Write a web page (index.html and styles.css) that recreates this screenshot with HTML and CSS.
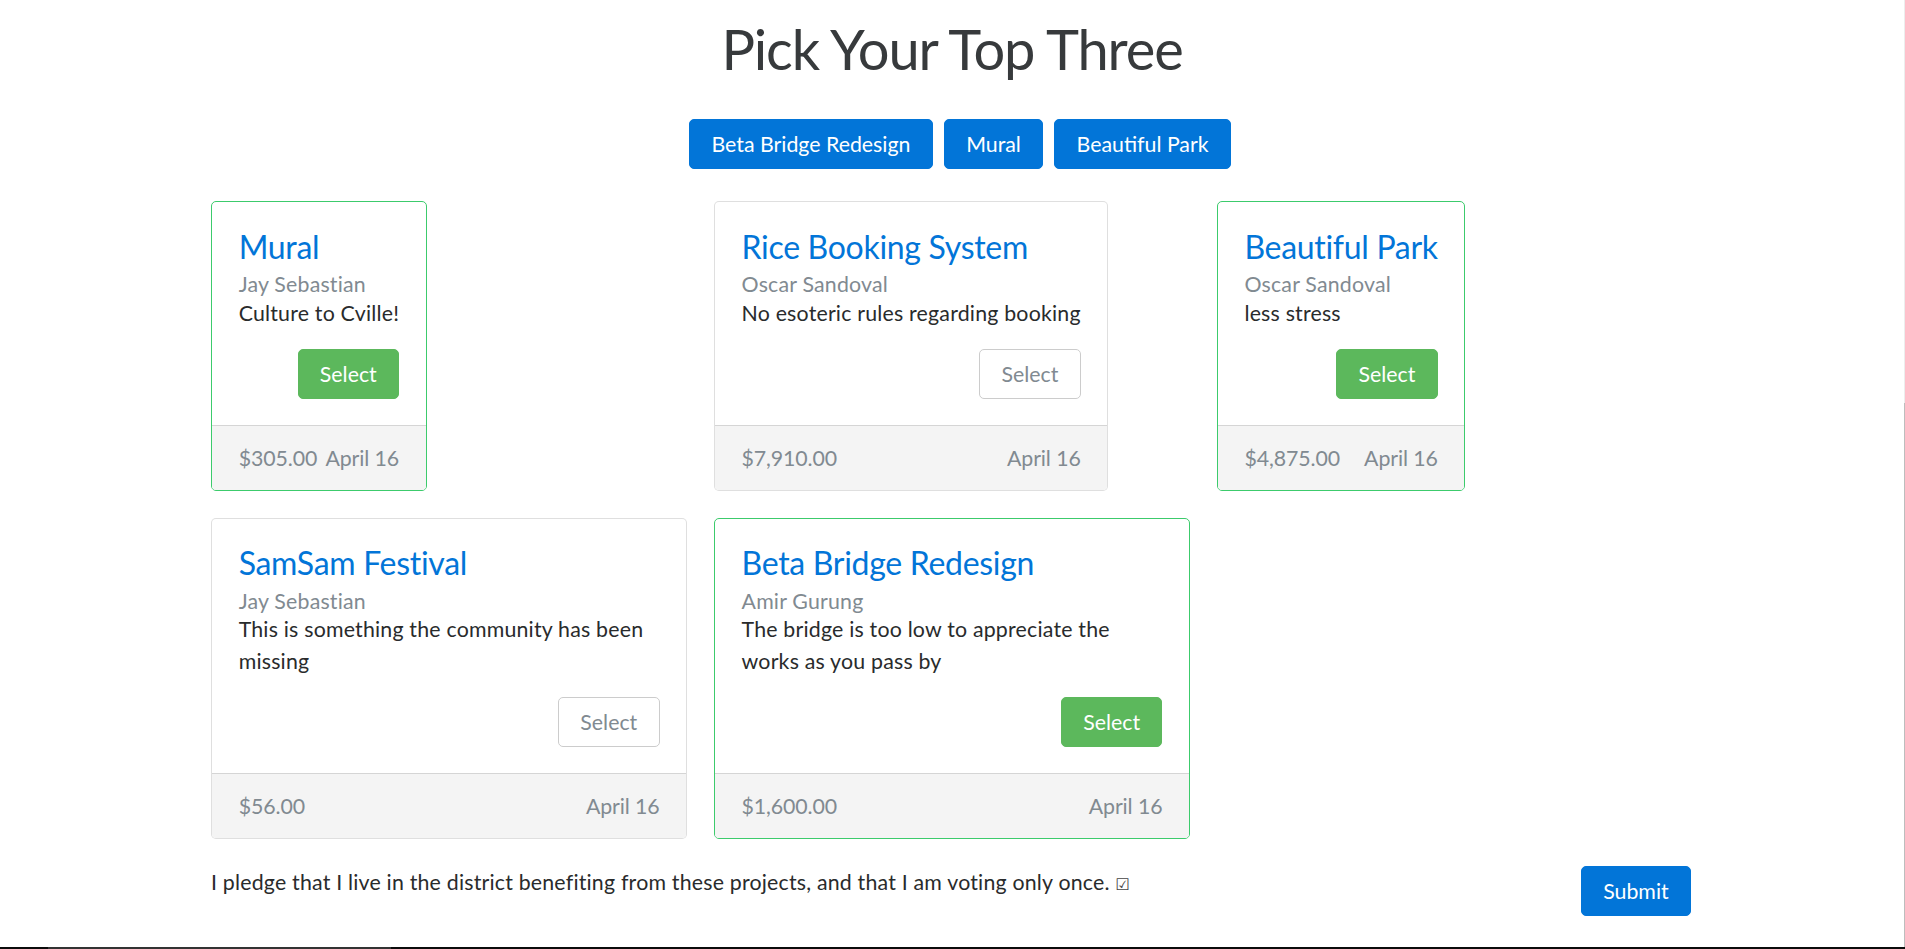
FILE: index.html
```html
<!DOCTYPE html>
<html lang="en">
<head>
<meta charset="utf-8">
<title>Pick Your Top Three</title>
<link rel="stylesheet" href="styles.css">
</head>
<body>
<div class="frame">
  <div class="page">
    <h1 class="heading">Pick Your Top Three</h1>
    <div class="picks">
      <button class="btn btn-primary">Beta Bridge Redesign</button>
      <button class="btn btn-primary">Mural</button>
      <button class="btn btn-primary">Beautiful Park</button>
    </div>
    <div class="container">
      <div class="grid">
        <div class="card selected">
          <div class="card-body">
            <h4 class="card-title">Mural</h4>
            <h6 class="card-subtitle">Jay Sebastian</h6>
            <p class="card-text">Culture to Cville!</p>
            <div class="actions"><button class="btn btn-success">Select</button></div>
          </div>
          <div class="card-footer"><span>$305.00</span><span>April 16</span></div>
        </div>
        <div class="card">
          <div class="card-body">
            <h4 class="card-title">Rice Booking System</h4>
            <h6 class="card-subtitle">Oscar Sandoval</h6>
            <p class="card-text">No esoteric rules regarding booking</p>
            <div class="actions"><button class="btn btn-outline">Select</button></div>
          </div>
          <div class="card-footer"><span>$7,910.00</span><span>April 16</span></div>
        </div>
        <div class="card selected">
          <div class="card-body">
            <h4 class="card-title">Beautiful Park</h4>
            <h6 class="card-subtitle">Oscar Sandoval</h6>
            <p class="card-text">less stress</p>
            <div class="actions"><button class="btn btn-success">Select</button></div>
          </div>
          <div class="card-footer"><span>$4,875.00</span><span>April 16</span></div>
        </div>
        <div class="card">
          <div class="card-body">
            <h4 class="card-title">SamSam Festival</h4>
            <h6 class="card-subtitle">Jay Sebastian</h6>
            <p class="card-text">This is something the community has been missing</p>
            <div class="actions"><button class="btn btn-outline">Select</button></div>
          </div>
          <div class="card-footer"><span>$56.00</span><span>April 16</span></div>
        </div>
        <div class="card selected">
          <div class="card-body">
            <h4 class="card-title">Beta Bridge Redesign</h4>
            <h6 class="card-subtitle">Amir Gurung</h6>
            <p class="card-text">The bridge is too low to appreciate the works as you pass by</p>
            <div class="actions"><button class="btn btn-success">Select</button></div>
          </div>
          <div class="card-footer"><span>$1,600.00</span><span>April 16</span></div>
        </div>
      </div>
      <div class="pledge-row">
        <p class="pledge">I pledge that I live in the district benefiting from these projects, and that I am voting only once. <span class="check">&#9745;</span></p>
        <button class="btn btn-primary btn-submit">Submit</button>
      </div>
    </div>
  </div>
  <div class="vscroll"><div class="vtrack"></div><div class="vthumb"></div></div>
</div>
<div class="hbar"><div class="hthumb"></div></div>
</body>
</html>
```

FILE: styles.css
```css
* { box-sizing: border-box; }

html, body {
  margin: 0;
  padding: 0;
  height: 100%;
}

body {
  display: flex;
  flex-direction: column;
  height: 100vh;
  overflow: hidden;
  background: #fff;
  font-family: Lato, "Open Sans", sans-serif;
  font-size: 21.33px;
  line-height: 32px;
  letter-spacing: 0.2px;
  color: #292b2c;
}

.frame {
  flex: 1;
  display: flex;
  min-height: 0;
}

.page {
  flex: 1;
  min-width: 0;
}

.vscroll {
  width: 1px;
  display: flex;
  flex-direction: column;
}
.vtrack { height: 403px; background: #ededed; }
.vthumb { flex: 1; background: #bdbdbd; }

.hbar {
  height: 2px;
  background: #0b0b0b;
  display: flex;
}
.hthumb {
  margin-left: 48px;
  width: 343px;
  background: #333;
}

.heading {
  margin: 18px 0 0;
  text-align: center;
  font-size: 56px;
  line-height: 62px;
  font-weight: 400;
  letter-spacing: -1.1px;
  color: #373a3c;
}

.picks {
  display: flex;
  justify-content: center;
  gap: 11px;
  padding-left: 16px;
  margin-top: 39px;
}

.btn {
  font-family: inherit;
  font-size: 21.33px;
  line-height: 32px;
  letter-spacing: 0;
  padding: 8px 21.33px;
  border: 1px solid transparent;
  border-radius: 5px;
  cursor: pointer;
}

.btn-primary {
  background: #0275d8;
  border-color: #0275d8;
  color: #fff;
}

.btn-success {
  background: #5cb85c;
  border-color: #5cb85c;
  color: #fff;
}

.btn-outline {
  background: #fff;
  border-color: #ccc;
  color: #818a91;
}

.container {
  width: 1482px;
  margin: 32px auto 0;
}

.grid {
  display: grid;
  grid-template-columns: repeat(3, 1fr);
  column-gap: 26.67px;
  row-gap: 27px;
  align-items: start;
}

.card {
  justify-self: start;
  width: fit-content;
  max-width: 100%;
  border: 1px solid rgba(0, 0, 0, 0.125);
  border-radius: 5px;
  background: #fff;
  overflow: hidden;
}

.card.selected {
  border-color: #3ccb6c;
}

.card-body {
  padding: 26.67px 26.67px 25.7px;
}

.card-title {
  margin: 0 0 16px;
  font-size: 32px;
  line-height: 35.2px;
  font-weight: 400;
  letter-spacing: -0.3px;
  color: #0275d8;
}

.card-subtitle {
  margin: -6.5px 0 0;
  font-size: 21.33px;
  line-height: 23.5px;
  font-weight: 400;
  color: #818a91;
}

.card-text {
  margin: 0 0 20px;
  color: #292b2c;
}

.actions {
  display: flex;
  justify-content: flex-end;
}

.card-footer {
  display: flex;
  justify-content: space-between;
  gap: 2px;
  padding: 16px 26.67px;
  background: #f4f4f4;
  border-top: 1px solid rgba(0, 0, 0, 0.125);
  color: #818a91;
  letter-spacing: -0.1px;
}

.pledge-row {
  display: flex;
  justify-content: space-between;
  align-items: flex-start;
  margin-top: 27px;
}

.pledge {
  margin: 0;
  color: #292b2c;
}

.check {
  font-family: "DejaVu Sans", sans-serif;
  font-size: 16px;
  color: #444;
}

.btn-submit {
  margin-right: 2px;
}
```
